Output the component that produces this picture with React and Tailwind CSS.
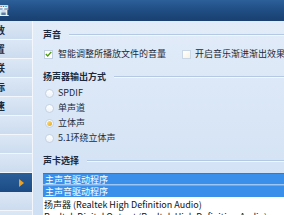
import React from "react";

const font = { fontFamily: '"Noto Sans CJK SC", "Liberation Sans", sans-serif' };

function Heading({ text }) {
  return (
    <div className="flex items-center h-[12px] pr-0">
      <span className="font-bold text-[9px] leading-[12px] text-[#1b2a3c] whitespace-nowrap">{text}</span>
      <div className="flex-1 ml-[8px] flex flex-col">
        <div className="h-px bg-[#b3c8e2]" />
        <div className="h-px bg-[#f2f7fd]" />
      </div>
    </div>
  );
}

function Radio({ label, checked }) {
  return (
    <div className="flex items-center h-[12px] pl-[2px]">
      <div className="w-[9px] h-[9px] rounded-full border border-[#c4d2e2] bg-gradient-to-b from-white to-[#eef3f9] flex items-center justify-center">
        {checked && <div className="w-[5px] h-[5px] rounded-full bg-gradient-to-br from-[#ffe37a] to-[#e0a316]" />}
      </div>
      <span className="ml-[4px] text-[9px] leading-[12px] text-[#1b2a3c] whitespace-nowrap">{label}</span>
    </div>
  );
}

export default function App() {
  const sideRows = ["参数", "设置", "关联", "鼠标", "加速", "", "", ""];
  return (
    <div className="w-[284px] h-[215px] overflow-hidden flex flex-col bg-[#d8e6f6]" style={font}>
      <div className="h-[21px] shrink-0 bg-gradient-to-b from-[#2d5f98] via-[#1f4d84] to-[#19406f] flex items-center overflow-hidden">
        <span className="-ml-[2px] text-[#eef4fb] font-bold text-[11px] leading-none whitespace-nowrap">置</span>
      </div>
      <div className="flex flex-1 min-h-0">
        <div className="w-[33px] shrink-0 flex flex-col border-r border-[#f4f8fd] overflow-hidden bg-[#e6eef8]">
          {sideRows.map((t, i) => (
            <div key={i} className="h-[19px] shrink-0 border-b border-[#f3f7fc] bg-gradient-to-b from-[#dbe7f5] to-[#ccdcef] flex items-center overflow-hidden">
              <span className="-ml-[5px] text-[10px] leading-none font-bold text-[#1b2a3c] whitespace-nowrap">{t ? t.slice(1) : ""}</span>
            </div>
          ))}
          <div className="h-[19px] shrink-0 bg-gradient-to-b from-[#2b5f9a] to-[#1b4b84] flex items-center justify-end pr-[8px]">
            <svg width="5" height="8" viewBox="0 0 5 8">
              <path d="M0 0 L5 4 L0 8 Z" fill="#f0a020" />
            </svg>
          </div>
          <div className="h-[19px] shrink-0 border-b border-[#f3f7fc] bg-gradient-to-b from-[#dbe7f5] to-[#ccdcef]" />
          <div className="h-[19px] shrink-0 bg-gradient-to-b from-[#dbe7f5] to-[#ccdcef]" />
        </div>
        <div className="flex-1 min-w-0 bg-gradient-to-b from-[#e2ecf9] via-[#d9e6f6] to-[#cfe0f4] pl-[10px] flex flex-col overflow-hidden">
          <div className="mt-[8px]"><Heading text="声音" /></div>
          <div className="mt-[7px] flex items-center h-[12px] pl-[1px]">
            <div className="w-[9px] h-[9px] border border-[#c0cfe0] bg-white flex items-center justify-center">
              <svg width="7" height="6" viewBox="0 0 7 6">
                <path d="M0.8 3 L2.7 4.9 L6.3 0.9" stroke="#4d9a12" strokeWidth="1.4" fill="none" />
              </svg>
            </div>
            <span className="ml-[5px] text-[9px] leading-[12px] text-[#1b2a3c] whitespace-nowrap">智能调整所播放文件的音量</span>
            <div className="ml-[16px] w-[9px] h-[9px] shrink-0 border border-[#c8d6e6] bg-gradient-to-br from-white to-[#f7f3e2]" />
            <span className="ml-[4px] text-[9px] leading-[12px] text-[#1b2a3c] whitespace-nowrap">开启音乐渐进渐出效果</span>
          </div>
          <div className="mt-[11px]"><Heading text="扬声器输出方式" /></div>
          <div className="mt-[4px] flex flex-col gap-[3px]">
            <Radio label="SPDIF" />
            <Radio label="单声道" />
            <Radio label="立体声" checked />
            <Radio label="5.1环绕立体声" />
          </div>
          <div className="mt-[11px]"><Heading text="声卡选择" /></div>
          <div className="mt-[6px] flex flex-col">
            <div className="h-[11px] bg-[#3a8fea] border-t border-[#2f7ad2] flex items-center pl-[2px]">
              <span className="text-[9px] leading-none text-white whitespace-nowrap">主声音驱动程序</span>
            </div>
            <div className="h-px bg-[#9fc6f2]" />
            <div className="h-[12px] bg-[#3a8fea] border-t border-[#6aa9ee] flex items-center pl-[2px]">
              <span className="text-[9px] leading-none text-white whitespace-nowrap">主声音驱动程序</span>
            </div>
            <div className="bg-white flex flex-col pl-[1px] pt-[1px]">
              <div className="h-[12px] flex items-center">
                <span className="text-[9px] leading-none text-[#111] whitespace-nowrap">扬声器 (Realtek High Definition Audio)</span>
              </div>
              <div className="h-[12px] flex items-center">
                <span className="text-[9px] leading-none text-[#111] whitespace-nowrap">Realtek Digital Output (Realtek High Definition Audio)</span>
              </div>
            </div>
          </div>
        </div>
      </div>
    </div>
  );
}
